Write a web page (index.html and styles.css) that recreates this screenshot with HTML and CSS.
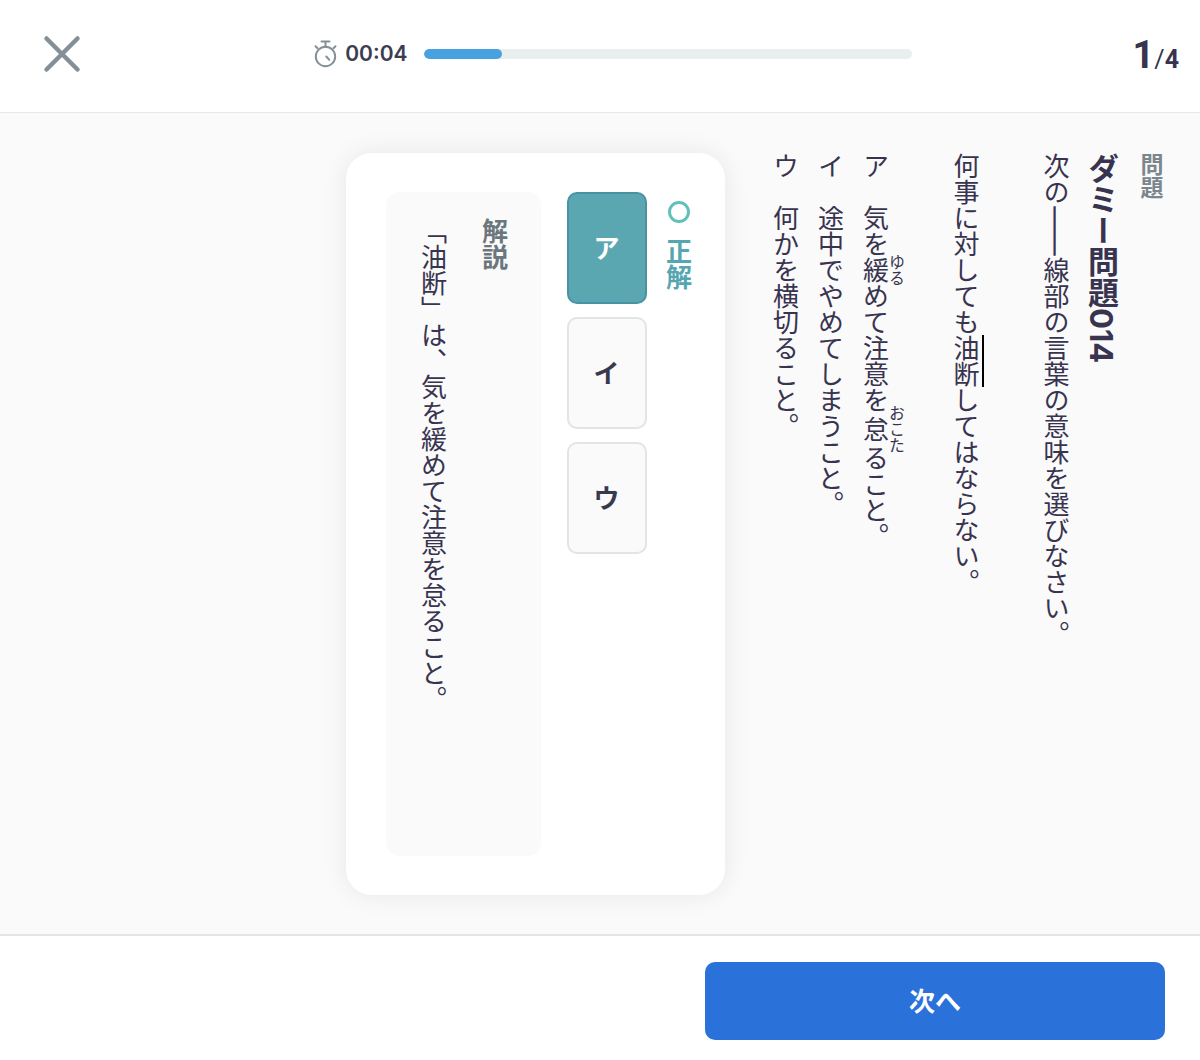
FILE: index.html
```html
<!DOCTYPE html>
<html lang="ja">
<head>
<meta charset="utf-8">
<meta name="viewport" content="width=device-width, initial-scale=1">
<title>ダミー問題014</title>
<link rel="stylesheet" href="styles.css">
</head>
<body>
<header class="header">
  <button class="close" type="button" aria-label="閉じる">
    <svg width="38" height="38" viewBox="0 0 38 38" fill="none" stroke="currentColor" stroke-width="4.500" stroke-linecap="round"><path d="M3.500 3.500 34.500 34.500M34.500 3.500 3.500 34.500"/></svg>
  </button>
  <div class="status">
    <svg class="watch" width="24" height="28" viewBox="0 0 24 28" fill="none" stroke="currentColor" stroke-width="2" stroke-linecap="round"><circle cx="11.500" cy="16.500" r="9.700"/><path d="M7.500 1.500h8M11.500 1.500v5M1.500 6.300l2 2M21.500 6.300l-2 2M12.300 16.500l3 3.300"/></svg>
    <time class="time">00:04</time>
    <progress class="bar" value="16" max="100" aria-label="進み具合"></progress>
  </div>
  <div class="count"><span class="current">1</span><span class="slash">/</span><span class="total">4</span></div>
</header>
<main class="main">
  <section class="question">
    <p class="label">問題</p>
    <h1 class="title">ダミー問題014</h1>
    <div class="body">
      <p>次の<span class="rule">――</span>線部の言葉の意味を選びなさい。</p>
      <p>何事に対しても<u>油断</u>してはならない。</p>
      <ul class="options">
        <li>ア　気を<ruby>緩<rt>ゆる</rt></ruby>めて注意を<ruby>怠<rt>おこた</rt></ruby>ること。</li>
        <li>イ　途中でやめてしまうこと。</li>
        <li>ウ　何かを横切ること。</li>
      </ul>
    </div>
  </section>
  <section class="card">
    <div class="result"><span class="circle"></span><span>正解</span></div>
    <div class="choices">
      <button class="choice correct" type="button">ア</button>
      <button class="choice" type="button">イ</button>
      <button class="choice" type="button">ウ</button>
    </div>
    <div class="explanation">
      <h2 class="explanation-title">解説</h2>
      <p class="explanation-text">「油断」は、気を緩めて注意を怠ること。</p>
    </div>
  </section>
</main>
<footer class="footer">
  <button class="next" type="button">次へ</button>
</footer>
</body>
</html>
```

FILE: styles.css
```css
* {
  box-sizing: border-box;
}

body {
  display: flex;
  flex-direction: column;
  min-height: 100vh;
  margin: 0;
  background: #fff;
  color: #38334f;
  font-family: "Noto Sans CJK JP", sans-serif;
  font-size: 26px;
}

p,
h1,
h2,
ul {
  margin: 0;
  padding: 0;
  list-style: none;
}

button {
  border: 0;
  padding: 0;
  background: none;
  font: inherit;
  cursor: pointer;
}

/* Header */
.header {
  display: flex;
  align-items: center;
  justify-content: space-between;
  height: 113px;
  padding: 0 21px 5px 29px;
  border-bottom: 1px solid #e3e9e9;
}

.close {
  display: flex;
  align-items: center;
  justify-content: center;
  width: 65px;
  height: 65px;
  color: #849098;
}

.status {
  display: flex;
  flex: 0 1 598px;
  align-items: center;
}

.watch {
  flex: none;
  color: #849098;
}

.time {
  width: 63px;
  margin: 0 16px 0 7px;
  color: #3d3d52;
  font-family: Inter, sans-serif;
  font-size: 21px;
  font-weight: 600;
}

.bar {
  flex: 1;
  min-width: 0;
  height: 10px;
  border: 0;
  border-radius: 5px;
  overflow: hidden;
  appearance: none;
}

.bar::-webkit-progress-bar {
  background: #e9eeef;
}

.bar::-webkit-progress-value {
  border-radius: 5px;
  background: #48a2e0;
}

.count {
  display: flex;
  align-items: baseline;
  padding-top: 8px;
  font-family: Roboto, sans-serif;
  font-size: 25px;
  font-weight: 700;
  line-height: 40px;
}

.current {
  font-size: 38px;
}

.slash {
  font-weight: 400;
}

/* Question */
.main {
  display: flex;
  flex: 1;
  flex-direction: row-reverse;
  gap: 39px;
  padding: 40px 32px 39px;
  background: #fafafa;
}

.question {
  flex: none;
  writing-mode: vertical-rl;
}

.label {
  margin-left: 12px;
  color: #7a868d;
  font-size: 23px;
  font-weight: 700;
  line-height: 32px;
}

.title {
  font-family: Inter, "Noto Sans CJK JP", sans-serif;
  font-size: 31px;
  font-weight: 700;
  line-height: 45px;
}

.body {
  line-height: 45px;
}

.body p {
  margin-left: 45px;
}

/* The furigana widens the first option's line, so the gap before it is smaller */
.body p:last-of-type {
  margin-left: 39px;
}

.body u {
  text-decoration: underline 2px #000;
  text-underline-position: right;
  text-underline-offset: 1px;
}

.body rt {
  font-size: 16px;
}

.rule {
  -webkit-text-stroke: 1px currentColor;
}

/* Answer card */
.card {
  display: flex;
  flex: none;
  flex-direction: row-reverse;
  padding: 39px 26px 39px 40px;
  border-radius: 26px;
  background: #fff;
  box-shadow: 0 0 26px rgba(0, 0, 0, 0.08);
}

.result {
  display: flex;
  align-items: center;
  gap: 15px;
  padding-top: 9px;
  color: #55a6b0;
  font-weight: 700;
  line-height: 39px;
  writing-mode: vertical-rl;
}

.circle {
  width: 22px;
  height: 22px;
  border: 3px solid #62c0bb;
  border-radius: 50%;
}

.choices {
  display: flex;
  flex-direction: column;
  gap: 13px;
  margin: 0 13px 0 26px;
}

.choice {
  width: 80px;
  height: 112px;
  padding-bottom: 4px;
  border: 2px solid #dfe5e8;
  border-radius: 10px;
  background: #fafafa;
  color: #38394e;
  font-weight: 700;
}

.choice.correct {
  border-color: #4893a3;
  background: #5aa7b1;
  color: #fff;
}

.explanation {
  padding: 26px;
  border-radius: 13px;
  background: #fafafa;
  writing-mode: vertical-rl;
}

.explanation-title {
  margin-left: 19px;
  color: #6b767d;
  font-size: 26px;
  font-weight: 700;
  line-height: 39px;
}

.explanation-text {
  line-height: 45px;
}

/* Footer */
.footer {
  display: flex;
  justify-content: flex-end;
  padding: 26px 35px 20px;
  border-top: 2px solid #dfe5e8;
}

.next {
  flex: 0 1 460px;
  height: 78px;
  padding-bottom: 4px;
  border-radius: 10px;
  background: #2a71da;
  color: #fff;
  font-weight: 700;
}
```
